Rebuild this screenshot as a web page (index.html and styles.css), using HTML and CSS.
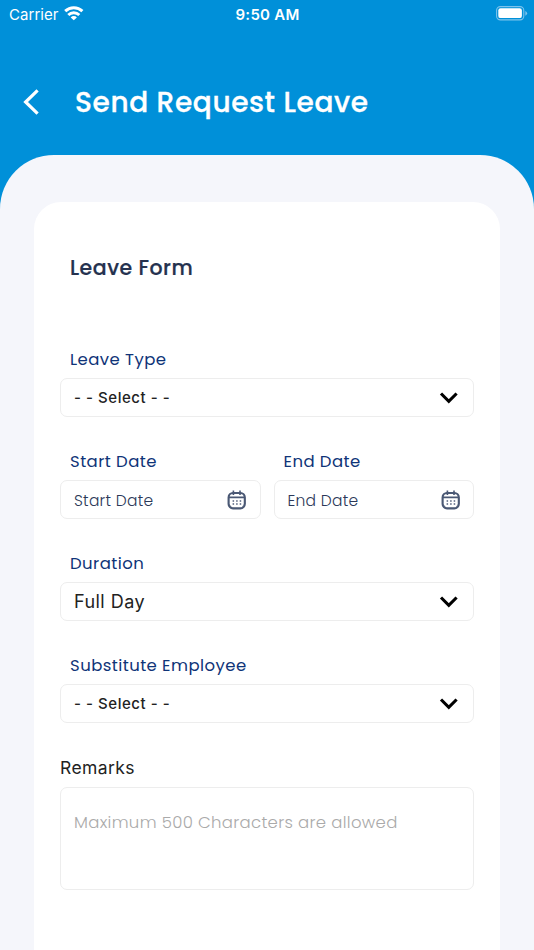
FILE: index.html
```html
<!DOCTYPE html>
<html lang="en">
<head>
<meta charset="utf-8">
<title>Send Request Leave</title>
<link rel="stylesheet" href="styles.css">
</head>
<body>
<svg class="defs" aria-hidden="true">
  <symbol id="chevron" viewBox="0 0 20 14"><path d="M2 2.5l7.8 7.8 7.8-7.8" fill="none" stroke="#000" stroke-width="3.1"/></symbol>
  <symbol id="calendar" viewBox="0 0 20 20">
    <path d="M5.6 3h8.2q4 0 4 4v6.6l-3.6 4.8H5.2l-3.6-4.8V7q0-4 4-4z" fill="none" stroke="#8b94a8" stroke-width="1"/>
    <rect x="1.6" y="3" width="16.2" height="15.4" rx="4.4" fill="none" stroke="#4a5874" stroke-width="2.1"/>
    <path d="M2 7.4h15.4M6.4 .5v4.4M13 .5v4.4" fill="none" stroke="#4a5874" stroke-width="1.6"/>
    <path d="M5.6 11h8.6M5.6 14h8.6" fill="none" stroke="#7c869c" stroke-width="1.8" stroke-dasharray="1.5 2.05"/>
  </symbol>
</svg>
<div class="status">
  <div class="carrier"><span>Carrier</span>
    <svg class="wifi" viewBox="0 0 20 15"><g fill="none" stroke="#fff" stroke-width="3"><path d="M1.2 5.2a12.6 12.6 0 0 1 17.2 0"/><path d="M4.3 9a8 8 0 0 1 11 0"/></g><path d="M9.8 14.3L6.7 11.4a4.4 4.4 0 0 1 6.2 0z" fill="#fff"/></svg>
  </div>
  <div class="time">9:50 AM</div>
  <svg class="battery" viewBox="0 0 32 15"><rect x=".6" y=".6" width="27.2" height="13.3" rx="3.8" fill="none" stroke="#7cc3ec" stroke-width="1.1"/><rect x="2.3" y="2.3" width="23.6" height="9.8" rx="2.2" fill="#fff"/><path d="M29.3 4.9q1.8 .8 1.8 2.4t-1.8 2.4z" fill="#7cc3ec"/></svg>
</div>
<header class="header">
  <svg class="back" viewBox="0 0 18 28"><path d="M15.6 2.4L3.6 14l12 11.6" fill="none" stroke="#fff" stroke-width="3.2"/></svg>
  <h1>Send Request Leave</h1>
</header>
<main class="sheet">
  <form class="card">
    <h2>Leave Form</h2>
    <div class="field">
      <div class="label">Leave Type</div>
      <div class="box"><span class="select">- - Select - -</span><svg class="chevron"><use href="#chevron"/></svg></div>
    </div>
    <div class="row">
      <div class="field">
        <div class="label">Start Date</div>
        <div class="box"><span class="date">Start Date</span><svg class="calendar"><use href="#calendar"/></svg></div>
      </div>
      <div class="field">
        <div class="label">End Date</div>
        <div class="box"><span class="date">End Date</span><svg class="calendar"><use href="#calendar"/></svg></div>
      </div>
    </div>
    <div class="field">
      <div class="label">Duration</div>
      <div class="box"><span class="value">Full Day</span><svg class="chevron"><use href="#chevron"/></svg></div>
    </div>
    <div class="field">
      <div class="label">Substitute Employee</div>
      <div class="box"><span class="select">- - Select - -</span><svg class="chevron"><use href="#chevron"/></svg></div>
    </div>
    <div class="remarks">Remarks</div>
    <div class="area">Maximum 500 Characters are allowed</div>
  </form>
</main>
</body>
</html>
```
FILE: styles.css
```css
* { box-sizing: border-box; }
body {
  margin: 0;
  height: 950px;
  overflow: hidden;
  background: #0090d9;
  font-family: Inter, "Liberation Sans", sans-serif;
  white-space: nowrap;
}
.defs { display: none; }
.status {
  display: grid;
  grid-template-columns: 1fr auto 1fr;
  height: 28px;
  align-items: center;
  padding: 0 6px 0 9px;
  color: #fff;
}
.carrier { display: flex; align-items: center; gap: 5px; font-size: 15px; letter-spacing: .05px; }
.wifi { width: 20px; height: 15px; margin-top: -2px; }
.time { font-size: 15px; font-weight: 600; letter-spacing: .25px; margin-right: 2px; }
.battery { width: 32px; height: 15px; justify-self: end; margin-top: -1px; }
.header {
  height: 127px;
  display: flex;
  align-items: center;
  padding: 20px 0 0 22px;
}
.back { width: 18px; height: 28px; margin-right: 35px; }
h1, .sheet h2, .label, .date, .area { font-family: Poppins, Inter, sans-serif; }
h1 {
  margin: 2px 0 0;
  color: #fff;
  font-size: 28px;
  font-weight: 500;
  letter-spacing: .6px;
  -webkit-text-stroke: .3px #fff;
}
.sheet {
  height: 795px;
  background: #f5f6fb;
  border-radius: 54px 54px 0 0;
  padding: 47px 34px 0;
  overflow: hidden;
}
.card {
  height: 748px;
  background: #fff;
  border-radius: 27px 27px 0 0;
  padding: 50px 26px 0;
}
.sheet h2 {
  margin: 0 0 65px 10px;
  color: #25324f;
  font-size: 20.5px;
  font-weight: 500;
  line-height: 32px;
  letter-spacing: .5px;
  -webkit-text-stroke: .2px #25324f;
}
.field { height: 102px; flex: 1; padding-top: 1px; }
.label {
  height: 28px;
  line-height: 20px;
  padding-left: 10px;
  color: #0f3478;
  font-size: 16.5px;
  letter-spacing: .44px;
}
.box {
  height: 39px;
  display: flex;
  align-items: center;
  justify-content: space-between;
  padding: 0 14px 0 13px;
  border: 1.5px solid #ededed;
  border-radius: 7px;
}
.row { display: flex; gap: 13px; }
.select { color: #222; font-size: 15px; font-weight: 500; letter-spacing: .55px; }
.date { color: #2b3858; font-size: 15.5px; font-weight: 300; letter-spacing: .25px; padding-top: 1px; }
.value { color: #222; font-size: 18px; letter-spacing: .45px; }
.chevron { width: 20px; height: 14px; }
.calendar { width: 20px; height: 20px; margin-right: -1.5px; }
.remarks { color: #222; font-size: 17.5px; line-height: 24px; letter-spacing: .4px; margin: -1px 0 7px; }
.area {
  height: 103px;
  padding: 23px 13px;
  border: 1.5px solid #ededed;
  border-radius: 7px;
  color: #aaa;
  font-size: 16.5px;
  font-weight: 300;
  line-height: 24px;
  letter-spacing: .32px;
}
```
